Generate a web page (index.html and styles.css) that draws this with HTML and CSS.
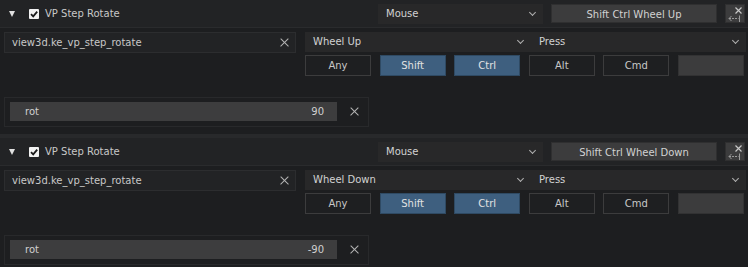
FILE: index.html
```html
<!DOCTYPE html>
<html lang="en">
<head>
    <meta charset="UTF-8">
    <meta name="viewport" content="width=device-width, initial-scale=1.0">
    <title>Keymap Items</title>
    <link rel="stylesheet" href="styles.css">
</head>
<body>
    <div class="kmi">
        <div class="kmi-head">
            <span class="disclose"></span>
            <span class="check">
                <svg width="10" height="10" viewBox="0 0 10 10"><path d="M2 5.2 L4.2 7.4 L8.2 2.6" fill="none" stroke="#1a1a1a" stroke-width="1.8"/></svg>
            </span>
            <span class="kmi-name">VP Step Rotate</span>
            <div class="dropdown type">Mouse<span class="chev"></span></div>
            <div class="btn keybtn">Shift Ctrl Wheel Up</div>
            <div class="btn iconbtn">
                <svg width="20" height="19" viewBox="0 0 20 19">
                    <path d="M9.5 2.5 L15.5 8.5 M15.5 2.5 L9.5 8.5" stroke="#c8c8c8" stroke-width="1.2"/>
                    <path d="M3 13.5 L12.5 13.5" stroke="#9a9a9a" stroke-width="1" stroke-dasharray="2 1"/>
                    <path d="M5.5 11 L3 13.5 L5.5 16" fill="none" stroke="#9a9a9a" stroke-width="1"/>
                    <path d="M13.5 10.5 L13.5 17" stroke="#9a9a9a" stroke-width="1"/>
                </svg>
            </div>
        </div>
        <div class="kmi-body">
            <div class="textfield">view3d.ke_vp_step_rotate<span class="xicon"></span></div>
            <div class="kmi-right">
                <div class="selects">
                    <div class="dropdown event">Wheel Up<span class="chev"></span></div>
                    <div class="dropdown value">Press<span class="chev"></span></div>
                </div>
                <div class="mods">
                    <div class="mod">Any</div>
                    <div class="mod on">Shift</div>
                    <div class="mod on">Ctrl</div>
                    <div class="mod">Alt</div>
                    <div class="mod">Cmd</div>
                    <div class="mod keyslot"></div>
                </div>
            </div>
        </div>
        <div class="props">
            <div class="numfield"><span>rot</span><span>90</span></div>
            <span class="xicon"></span>
        </div>
    </div>

    <div class="kmi">
        <div class="kmi-head">
            <span class="disclose"></span>
            <span class="check">
                <svg width="10" height="10" viewBox="0 0 10 10"><path d="M2 5.2 L4.2 7.4 L8.2 2.6" fill="none" stroke="#1a1a1a" stroke-width="1.8"/></svg>
            </span>
            <span class="kmi-name">VP Step Rotate</span>
            <div class="dropdown type">Mouse<span class="chev"></span></div>
            <div class="btn keybtn">Shift Ctrl Wheel Down</div>
            <div class="btn iconbtn">
                <svg width="20" height="19" viewBox="0 0 20 19">
                    <path d="M9.5 2.5 L15.5 8.5 M15.5 2.5 L9.5 8.5" stroke="#c8c8c8" stroke-width="1.2"/>
                    <path d="M3 13.5 L12.5 13.5" stroke="#9a9a9a" stroke-width="1" stroke-dasharray="2 1"/>
                    <path d="M5.5 11 L3 13.5 L5.5 16" fill="none" stroke="#9a9a9a" stroke-width="1"/>
                    <path d="M13.5 10.5 L13.5 17" stroke="#9a9a9a" stroke-width="1"/>
                </svg>
            </div>
        </div>
        <div class="kmi-body">
            <div class="textfield">view3d.ke_vp_step_rotate<span class="xicon"></span></div>
            <div class="kmi-right">
                <div class="selects">
                    <div class="dropdown event">Wheel Down<span class="chev"></span></div>
                    <div class="dropdown value">Press<span class="chev"></span></div>
                </div>
                <div class="mods">
                    <div class="mod">Any</div>
                    <div class="mod on">Shift</div>
                    <div class="mod on">Ctrl</div>
                    <div class="mod">Alt</div>
                    <div class="mod">Cmd</div>
                    <div class="mod keyslot"></div>
                </div>
            </div>
        </div>
        <div class="props">
            <div class="numfield"><span>rot</span><span>-90</span></div>
            <span class="xicon"></span>
        </div>
    </div>
</body>
</html>
```

FILE: styles.css
```css
body {
    margin: 0;
    background-color: #1d1e20;
    font-family: 'DejaVu Sans', sans-serif;
    font-size: 10px;
    color: #c8c8c8;
}
.kmi {
    border-bottom: 4px solid #28292b;
    height: 134px;
}
.kmi-head {
    display: flex;
    align-items: center;
    height: 28px;
    padding: 0 3px 0 0;
    background-color: #222325;
    border-bottom: 1px solid #2a2b2d;
    box-sizing: border-box;
}
.disclose {
    width: 0;
    height: 0;
    margin: 0 14px 0 9px;
    border-left: 3.5px solid transparent;
    border-right: 3.5px solid transparent;
    border-top: 6px solid #e0e0e0;
}
.check {
    width: 10px;
    height: 10px;
    background-color: #f2f2f2;
    border-radius: 1px;
    display: flex;
}
.kmi-name {
    margin-left: 6px;
    flex: 1;
}
.dropdown {
    position: relative;
    height: 20px;
    line-height: 20px;
    background-color: #282829;
    color: #d2d2d2;
    padding-left: 8px;
    box-sizing: border-box;
}
.chev {
    position: absolute;
    right: 8px;
    top: 6px;
    width: 4px;
    height: 4px;
    border-right: 1px solid #b0b0b0;
    border-bottom: 1px solid #b0b0b0;
    transform: rotate(45deg);
}
.type { width: 165px; }
.btn {
    height: 19px;
    line-height: 19px;
    background-color: #3c3c3d;
    border: 1px solid #2f2f30;
    box-sizing: border-box;
    text-align: center;
    color: #d2d2d2;
}
.keybtn {
    width: 166px;
    margin-left: 8px;
}
.iconbtn {
    width: 20px;
    margin-left: 8px;
    line-height: 0;
}
.kmi-body {
    display: flex;
    padding: 4px 2px 0 4px;
    gap: 9px;
}
.textfield {
    position: relative;
    width: 292px;
    height: 21px;
    line-height: 20px;
    box-sizing: border-box;
    background-color: #222325;
    border: 1px solid #2c2d2f;
    padding-left: 7px;
}
.xicon {
    position: absolute;
    width: 10px;
    height: 10px;
}
.xicon::before, .xicon::after {
    content: "";
    position: absolute;
    left: 0;
    top: 4px;
    width: 11px;
    height: 1.2px;
    background-color: #b4b4b4;
}
.xicon::before { transform: rotate(45deg); }
.xicon::after { transform: rotate(-45deg); }
.textfield .xicon {
    right: 6px;
    top: 5px;
}
.kmi-right {
    flex: 1;
}
.selects {
    display: flex;
    height: 21px;
}
.event { width: 226px; }
.value { flex: 1; }
.mods {
    display: grid;
    grid-template-columns: repeat(6, 1fr);
    gap: 8.6px;
    width: 439px;
    margin-top: 2px;
}
.mod {
    height: 21px;
    line-height: 19px;
    box-sizing: border-box;
    border: 1px solid #3c3c3d;
    background-color: #1e1f21;
    text-align: center;
    color: #c8c8c8;
}
.mod.on {
    background-color: #3e5f7f;
    border-color: #2f4a63;
    color: #e2e2e2;
}
.mod.keyslot {
    background-color: #3c3c3d;
    border-color: #323233;
}
.props {
    position: relative;
    width: 365px;
    height: 30px;
    margin: 21px 0 0 4px;
    border: 1px solid #28292b;
    box-sizing: border-box;
    padding: 4px 0 0 5px;
}
.numfield {
    display: flex;
    justify-content: space-between;
    width: 327px;
    height: 19px;
    line-height: 19px;
    box-sizing: border-box;
    padding: 0 13px 0 15px;
    background-color: #3d3d3e;
    color: #d0d0d0;
}
.props .xicon {
    right: 9px;
    top: 9px;
}
```
